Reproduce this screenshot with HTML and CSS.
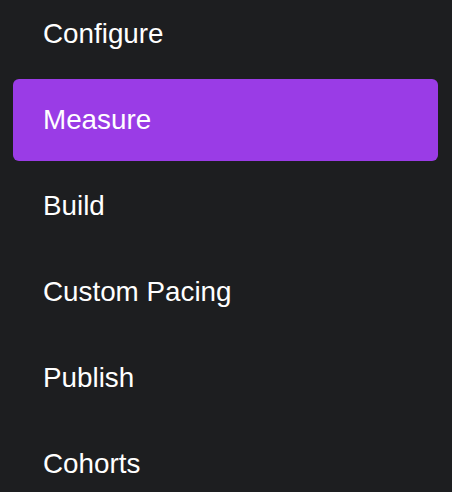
FILE: index.html
```html
<!DOCTYPE html>
<html lang="en">
<head>
  <meta charset="UTF-8">
  <meta name="viewport" content="width=device-width, initial-scale=1">
  <title>Menu</title>
  <link rel="stylesheet" href="styles.css">
</head>
<body>
  <nav class="side-menu">
    <a class="menu-item" href="#">Configure</a>
    <a class="menu-item active" href="#">Measure</a>
    <a class="menu-item" href="#">Build</a>
    <a class="menu-item" href="#">Custom Pacing</a>
    <a class="menu-item" href="#">Publish</a>
    <a class="menu-item" href="#">Cohorts</a>
  </nav>
</body>
</html>
```

FILE: styles.css
```css
/* Reset some defaults */
body, nav, a { margin: 0; padding: 0; box-sizing: border-box; }

body {
  font-family: 'Liberation Sans', Arial, sans-serif;
  background: #1d1e20;
  color: #ffffff;
  overflow: hidden;
}

.side-menu {
  display: flex;
  flex-direction: column;
  gap: 4px;
  margin-top: -7px;
  padding: 0 14px 0 13px;
}

.menu-item {
  display: flex;
  align-items: center;
  height: 82px;
  padding-left: 30px;
  border-radius: 6px;
  font-size: 27.8px;
  color: #ffffff;
  text-decoration: none;
}

.menu-item.active {
  background: #9a3ce6;
}
```
